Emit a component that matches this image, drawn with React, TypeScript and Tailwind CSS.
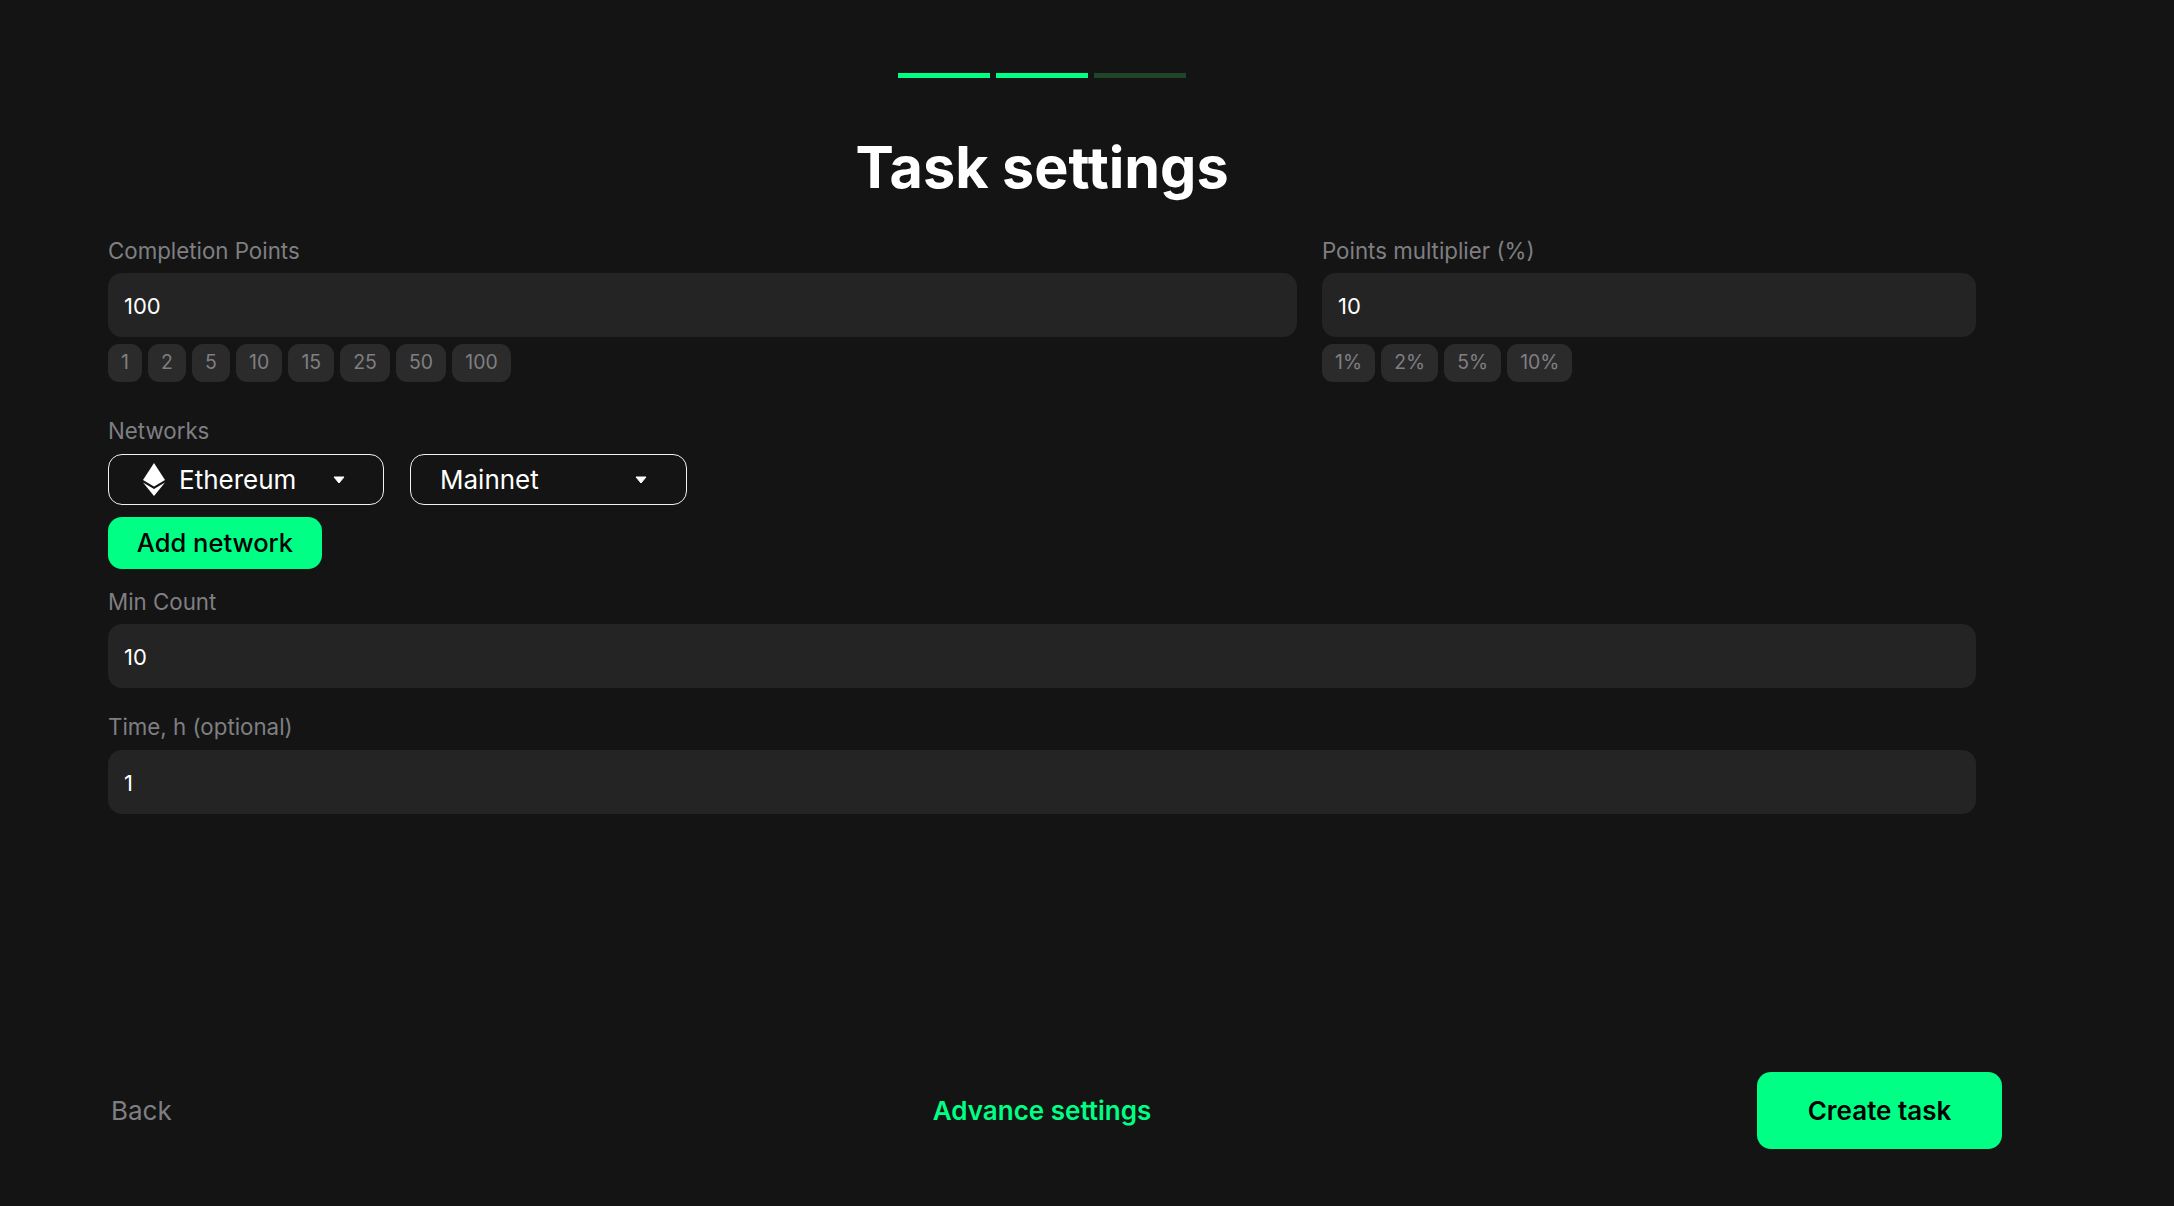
const labelClass = "text-[22.3px] leading-[30px] text-[#7f7f83]";
const inputClass =
  "flex h-16 items-center rounded-[14px] bg-[#242424] px-4 pt-[2px] text-[22px] text-white";

function Field({ label, value }: { label: string; value: string }) {
  return (
    <div>
      <div className={`${labelClass} mb-[7px]`}>{label}</div>
      <div className={inputClass}>{value}</div>
    </div>
  );
}

function Chips({ items }: { items: string[] }) {
  return (
    <div className="mt-[7px] flex gap-[6.2px]">
      {items.map((item) => (
        <span
          key={item}
          className="flex h-[38px] items-center rounded-[11px] bg-[#2b2b2b] px-[13px] text-[19.4px] text-[#7f7f83]"
        >
          {item}
        </span>
      ))}
    </div>
  );
}

function Caret() {
  return (
    <svg width="12" height="8" viewBox="0 0 12 8" className="shrink-0">
      <path d="M1 1h10L6 7z" fill="#fff" stroke="#fff" strokeWidth="1" strokeLinejoin="round" />
    </svg>
  );
}

function EthIcon() {
  return (
    <svg width="22" height="33" viewBox="0 0 22 33" className="shrink-0">
      <polygon points="11,0 22,17 11,23.5 0,17" fill="#fff" />
      <polygon points="11,33 0,19.5 11,26 22,19.5" fill="#fff" />
    </svg>
  );
}

export default function App() {
  return (
    <div className="flex h-[1206px] w-[2174px] flex-col overflow-hidden bg-[#141414] font-[Inter,sans-serif]">
      <div className="ml-[108px] w-[1868px]">
        <div className="mt-[73px] flex justify-center gap-[6px]">
          <div className="h-[5px] w-[92px] bg-[#00ff85]" />
          <div className="h-[5px] w-[92px] bg-[#00ff85]" />
          <div className="h-[5px] w-[92px] bg-[#1f4429]" />
        </div>
        <h1 className="mt-[54px] text-center text-[57.5px] leading-[70px] font-bold text-white">
          Task se<span className="tracking-[-2px]">t</span>tings
        </h1>
        <div className="mt-[34px] grid grid-cols-[1189px_654px] gap-[25px]">
          <div>
            <Field label="Completion Points" value="100" />
            <Chips items={["1", "2", "5", "10", "15", "25", "50", "100"]} />
          </div>
          <div>
            <Field label="Points multiplier (%)" value="10" />
            <Chips items={["1%", "2%", "5%", "10%"]} />
          </div>
        </div>
        <div className={`${labelClass} mt-[34px] mb-2`}>Networks</div>
        <div className="flex gap-[26px]">
          <div className="flex h-[51px] w-[276px] items-center rounded-[14px] border-[1.5px] border-[#f2f2f2] pr-[38px] pl-[34px] text-[26px] text-white">
            <EthIcon />
            <span className="ml-[14px]">Ethereum</span>
            <span className="ml-auto">
              <Caret />
            </span>
          </div>
          <div className="flex h-[51px] w-[277px] items-center rounded-[14px] border-[1.5px] border-[#f2f2f2] pr-[39px] pl-[29px] text-[26px] text-white">
            <span>Mainnet</span>
            <span className="ml-auto">
              <Caret />
            </span>
          </div>
        </div>
        <button className="mt-3 flex h-[52px] w-[214px] items-center justify-center rounded-[14px] bg-[#00ff85] pt-px text-[25.5px] font-medium text-black">
          Add network
        </button>
        <div className="mt-[18px]">
          <Field label="Min Count" value="10" />
        </div>
        <div className="mt-6">
          <div className={`${labelClass} mb-2`}>Time, h (optional)</div>
          <div className={inputClass}>1</div>
        </div>
      </div>
      <div className="mt-[258px] ml-[82px] grid w-[1920px] grid-cols-[1fr_auto_1fr] items-center">
        <span className="pb-px pl-[29px] text-[26px] text-[#7f7f83]">Back</span>
        <span className="pb-px text-[26px] font-semibold text-[#00ff85]">Advance settings</span>
        <button className="flex h-[77px] w-[245px] items-center justify-center justify-self-end rounded-[14px] bg-[#00ff85] pb-px text-[26px] font-semibold text-black">
          Create task
        </button>
      </div>
    </div>
  );
}
